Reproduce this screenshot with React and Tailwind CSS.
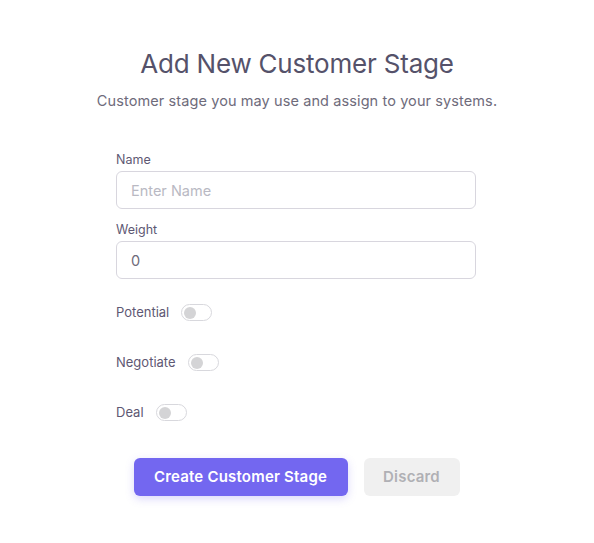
import React, { useState } from 'react';

const Toggle = () => (
  <span className="inline-flex items-center w-[31px] h-[17px] rounded-full border border-[#d8d8dd] bg-white px-[2px]">
    <span className="w-[12px] h-[12px] rounded-full bg-[#d4d4d6]" />
  </span>
);

const App = () => {
  const [name, setName] = useState('');
  const [weight, setWeight] = useState('0');

  return (
    <div className="w-[594px] h-[543px] bg-white font-['Inter','Noto_Sans',sans-serif]">
      <div className="flex flex-col items-center pt-[47px]">
        <h1 className="text-[26px] leading-[34px] text-[#55526a] tracking-[-0.2px]">Add New Customer Stage</h1>
        <p className="mt-[10px] text-[14.5px] leading-[20px] text-[#6e6b7b] tracking-[0.1px]">
          Customer stage you may use and assign to your systems.
        </p>
      </div>

      <form className="ml-[116px] w-[360px] mt-[41px]">
        <label className="block text-[12.5px] leading-[16px] text-[#5e5873]">Name</label>
        <input
          value={name}
          onChange={(e) => setName(e.target.value)}
          placeholder="Enter Name"
          className="mt-[3px] w-full h-[38px] rounded-[6px] border border-[#d8d6de] px-[14px] text-[14.5px] text-[#6e6b7b] placeholder:text-[#b9b9c3] outline-none"
        />

        <label className="block mt-[13px] text-[12.5px] leading-[16px] text-[#5e5873]">Weight</label>
        <input
          value={weight}
          onChange={(e) => setWeight(e.target.value)}
          className="mt-[3px] w-full h-[38px] rounded-[6px] border border-[#d8d6de] px-[14px] text-[14.5px] text-[#6e6b7b] outline-none"
        />

        <div className="mt-[25px] flex flex-col gap-[33px]">
          {['Potential', 'Negotiate', 'Deal'].map((s) => (
            <div key={s} className="flex items-center gap-[12px] h-[17px]">
              <span className="text-[13px] text-[#5e5873]">{s}</span>
              <Toggle />
            </div>
          ))}
        </div>
      </form>

      <div className="flex justify-center gap-[16px] mt-[37px] ml-[-1px]">
        <button className="w-[214px] h-[38px] rounded-[6px] bg-[#7367f0] text-white text-[15px] tracking-[0.2px] font-semibold shadow-[0_3px_8px_rgba(115,103,240,0.25)]">
          Create Customer Stage
        </button>
        <button className="w-[96px] h-[38px] rounded-[6px] bg-[#f0f0f0] text-[#b0b0b5] text-[15px] tracking-[0.2px] font-semibold">
          Discard
        </button>
      </div>
    </div>
  );
};

export default App;
